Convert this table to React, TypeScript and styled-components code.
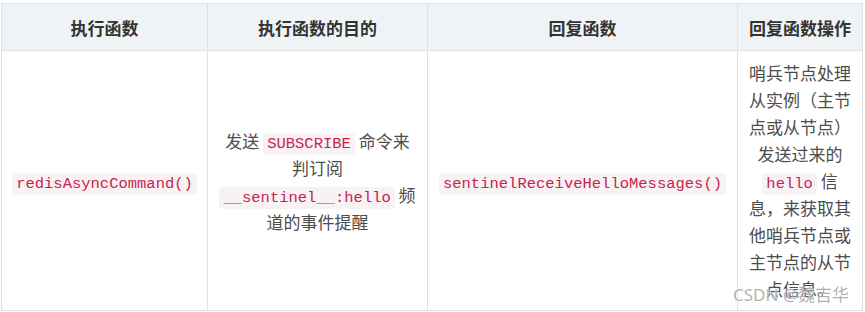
import React from 'react'
import styled, { createGlobalStyle } from 'styled-components'

const GlobalStyle = createGlobalStyle`
html, body {
  margin: 0;
  padding: 0;
  background: #ffffff;
}
body {
  font-family: "Noto Sans CJK SC", "Noto Sans", sans-serif;
}
`

const rows = [
  {
    fn: 'redisAsyncCommand()',
    reply: 'sentinelReceiveHelloMessages()',
  },
]

const App = () => {
  return (
    <Page>
      <GlobalStyle />
      <Table>
        <colgroup>
          <col style={{ width: 206 }} />
          <col style={{ width: 220 }} />
          <col style={{ width: 310 }} />
          <col style={{ width: 125 }} />
        </colgroup>
        <thead>
          <tr>
            <Th>执行函数</Th>
            <Th>执行函数的目的</Th>
            <Th>回复函数</Th>
            <Th>回复函数操作</Th>
          </tr>
        </thead>
        <tbody>
          {rows.map((r) => (
            <tr key={r.fn}>
              <Td>
                <Code>{r.fn}</Code>
              </Td>
              <Td>
                发送 <Code>SUBSCRIBE</Code> 命令来判订阅 <Code>__sentinel__:hello</Code> 频道的事件提醒
              </Td>
              <Td>
                <Code>{r.reply}</Code>
              </Td>
              <Td>
                哨兵节点处理从实例（主节点或从节点）发送过来的 <Code>hello</Code> 信息，来获取其他哨兵节点或主节点的从节点信息。
              </Td>
            </tr>
          ))}
        </tbody>
      </Table>
      <Watermark>CSDN @魏吉华</Watermark>
    </Page>
  )
}

export default App

const Page = styled.div`
position: relative;
width: 865px;
height: 312px;
padding: 3px 0 0 1px;
box-sizing: border-box;
overflow: hidden;
`

const Table = styled.table`
border-collapse: collapse;
table-layout: fixed;
width: 862px;
color: #4d4d4d;
font-size: 17px;
line-height: 27px;
`

const Th = styled.th`
background-color: #eff3f5;
border: 1px solid #dfe2e5;
color: #333333;
font-weight: bold;
height: 47px;
padding: 0 10px;
box-sizing: border-box;
text-align: center;
vertical-align: middle;
`

const Td = styled.td`
border: 1px solid #dfe2e5;
padding: 8px 10px;
height: 260px;
box-sizing: border-box;
text-align: center;
vertical-align: middle;
`

const Code = styled.code`
font-family: "Liberation Mono", "DejaVu Sans Mono", monospace;
font-size: 15.5px;
line-height: 20px;
white-space: nowrap;
color: #c7254e;
background-color: #f9f2f4;
border-radius: 3px;
padding: 2px 4px;
`

const Watermark = styled.div`
position: absolute;
left: 733px;
top: 284px;
font-family: "Noto Sans", "Noto Sans CJK SC", sans-serif;
font-size: 17px;
line-height: 22px;
color: rgba(150, 150, 150, 0.75);
text-shadow: 0 0 1px #ffffff;
white-space: nowrap;
`
